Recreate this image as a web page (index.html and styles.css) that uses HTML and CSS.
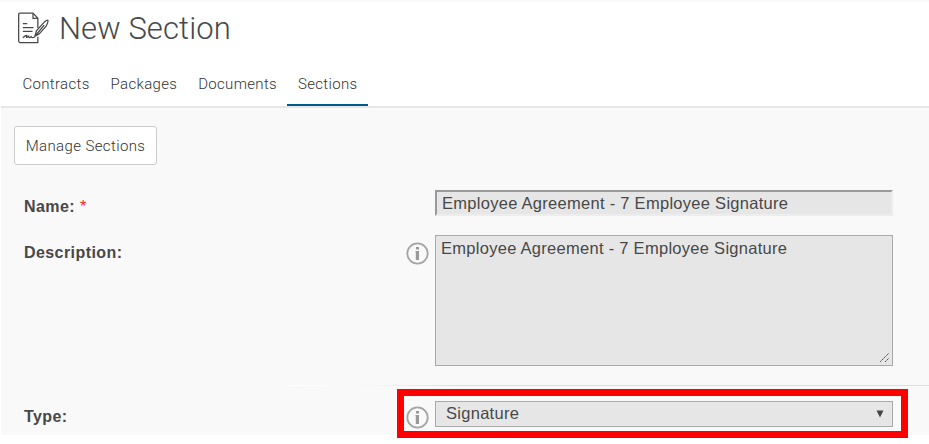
FILE: index.html
```html
<!DOCTYPE html>
<html lang="en">
<head>
	<meta charset="UTF-8">
	<title>New Section</title>
	<link rel="stylesheet" href="styles.css">
</head>

<body>

<header class="page-header">
	<svg class="title-icon" viewBox="0 0 32 32" fill="none" stroke="#484848" stroke-width="1.3">
		<path d="M20.500 16V6L15.500 .7H2Q.7 .7 .7 2V29.500Q.7 31 2 31H20.500V25"/>
		<path d="M15.500 1V6H20.500M5 11.500H9.500M5 15.500H16M5 19.500H15"/>
		<path d="M17.500 24.500L19 19L27.500 9.500Q30.500 7 31 8.500Q31 11 29 14L22 22ZM18 24L27 13"/>
		<path d="M5 26Q10 22 9 24.500Q8 27 11 24.500Q11 27 13.500 25Q14 27 17.500 25"/>
	</svg>
	<h1>New Section</h1>
</header>

<nav class="tabs">
	<a href="#">Contracts</a>
	<a href="#">Packages</a>
	<a href="#">Documents</a>
	<a href="#" class="active">Sections</a>
</nav>

<main class="panel">
	<button class="manage-btn" type="button">Manage Sections</button>

	<form>
		<div class="row name-row">
			<label for="name">Name: <span class="required">*</span></label>
			<span></span>
			<input id="name" class="field" type="text" value="Employee Agreement - 7 Employee Signature">
		</div>

		<div class="row description-row">
			<label for="description">Description:</label>
			<svg class="info" viewBox="0 0 23 23"><circle cx="11.500" cy="11.500" r="10.200" fill="none" stroke="#a5a5a5" stroke-width="1.800"/><path d="M10 5h3v2.500h-3zM9.500 9H13v9h-3.200v-8h-.3z" fill="#999"/></svg>
			<div class="textarea-wrap">
				<textarea id="description" class="field">Employee Agreement - 7 Employee Signature</textarea>
				<svg class="grip" viewBox="0 0 11 11"><path d="M1 10L10 1M6 10L10 6" stroke="#555" stroke-dasharray="2 .5"/></svg>
			</div>
		</div>

		<div class="divider"></div>

		<div class="row type-row">
			<label for="type">Type:</label>
			<svg class="info" viewBox="0 0 23 23"><circle cx="11.500" cy="11.500" r="10.200" fill="none" stroke="#a5a5a5" stroke-width="1.800"/><path d="M10 5h3v2.500h-3zM9.500 9H13v9h-3.200v-8h-.3z" fill="#999"/></svg>
			<div class="select-wrap">
				<select id="type" class="field">
					<option>Signature</option>
				</select>
				<svg class="arrow" viewBox="0 0 8 8"><path d="M.5 .5H7.500L4 7.500Z" fill="#444"/></svg>
			</div>
			<div class="highlight"></div>
		</div>
	</form>
</main>

</body>
</html>
```

FILE: styles.css
```css
* {
	box-sizing: border-box;
}
body {
	margin: 0;
	height: 444px;
	overflow: hidden;
	background-color: #fff;
	color: #484848;
	font-family: Roboto, sans-serif;
}
.page-header {
	display: flex;
	height: 64px;
	padding: 12px 0 0 18px;
	background: linear-gradient(#f7f7f7, #fff 3px);
}
.title-icon {
	width: 31px;
	height: 32px;
}
h1 {
	margin: -2px 0 0 10px;
	font-size: 31px;
	font-weight: 300;
	line-height: 37px;
	letter-spacing: .1px;
}
.tabs {
	display: flex;
	height: 44px;
	margin-left: 1px;
	padding-left: 11px;
	border-bottom: 2px solid #e6e6e6;
}
.tabs a {
	height: 42px;
	padding: 11px 10.500px 0 10.500px;
	font-size: 15px;
	font-weight: 300;
	line-height: 18px;
	letter-spacing: .32px;
	color: #333;
	text-decoration: none;
}
.tabs .active {
	border-bottom: 2px solid #005b8c;
}
.panel {
	height: 327px;
	margin-left: 1px;
	padding: 18px 0 0 13px;
	background-color: #f9f9f9;
}
.manage-btn {
	display: block;
	width: 143px;
	height: 39px;
	padding: 0;
	border: 1px solid #ccc;
	border-radius: 3px;
	background-color: #fff;
	color: #333;
	font: 300 15px Roboto, sans-serif;
	letter-spacing: .38px;
}
.row {
	display: grid;
	grid-template-columns: 392px 29px 458px;
	align-items: start;
	position: relative;
	font-family: "Liberation Sans", Arial, sans-serif;
}
label {
	padding-left: 10px;
	font-size: 16px;
	font-weight: bold;
	line-height: 18px;
	letter-spacing: .42px;
}
.required {
	color: #f22;
	font-weight: normal;
}
.field {
	display: block;
	width: 458px;
	margin: 0;
	border: 1px solid #aaa;
	border-radius: 0;
	background-color: #e6e6e6;
	color: #484848;
	font: 16.500px "Liberation Sans", Arial, sans-serif;
	letter-spacing: .28px;
}
.name-row {
	height: 45px;
	margin-top: 25px;
}
.name-row label,
.description-row label {
	margin-top: 8px;
}
.name-row .field {
	height: 26px;
	padding: 0 5px;
	border: 2px solid;
	border-color: #999 #ededed #ededed #999;
}
.info {
	width: 23px;
	height: 23px;
	margin-top: 7px;
}
.description-row {
	height: 150px;
}
.description-row label {
	margin-top: 9px;
}
.textarea-wrap,
.select-wrap {
	position: relative;
}
textarea.field {
	height: 131px;
	padding: 3px 5px;
	line-height: 18px;
	resize: none;
}
.grip {
	position: absolute;
	right: 3px;
	bottom: 3px;
	width: 11px;
	height: 11px;
}
.divider {
	height: 1px;
	margin-left: 275px;
	background: linear-gradient(to right, #fff, #f9f9f9 70px, #ddd 180px);
}
.type-row {
	padding-top: 15px;
}
.type-row label {
	margin-top: 7px;
}
.type-row .info {
	margin-top: 5px;
}
select.field {
	height: 26px;
	padding: 0 10px 2px;
	appearance: none;
}
.arrow {
	position: absolute;
	top: 9px;
	right: 9px;
	width: 8px;
	height: 8px;
}
/* red frame lies over the type field */
.highlight {
	position: absolute;
	top: 3px;
	left: 383px;
	width: 511px;
	height: 49px;
	border: 7px solid #f00;
	pointer-events: none;
}
```
